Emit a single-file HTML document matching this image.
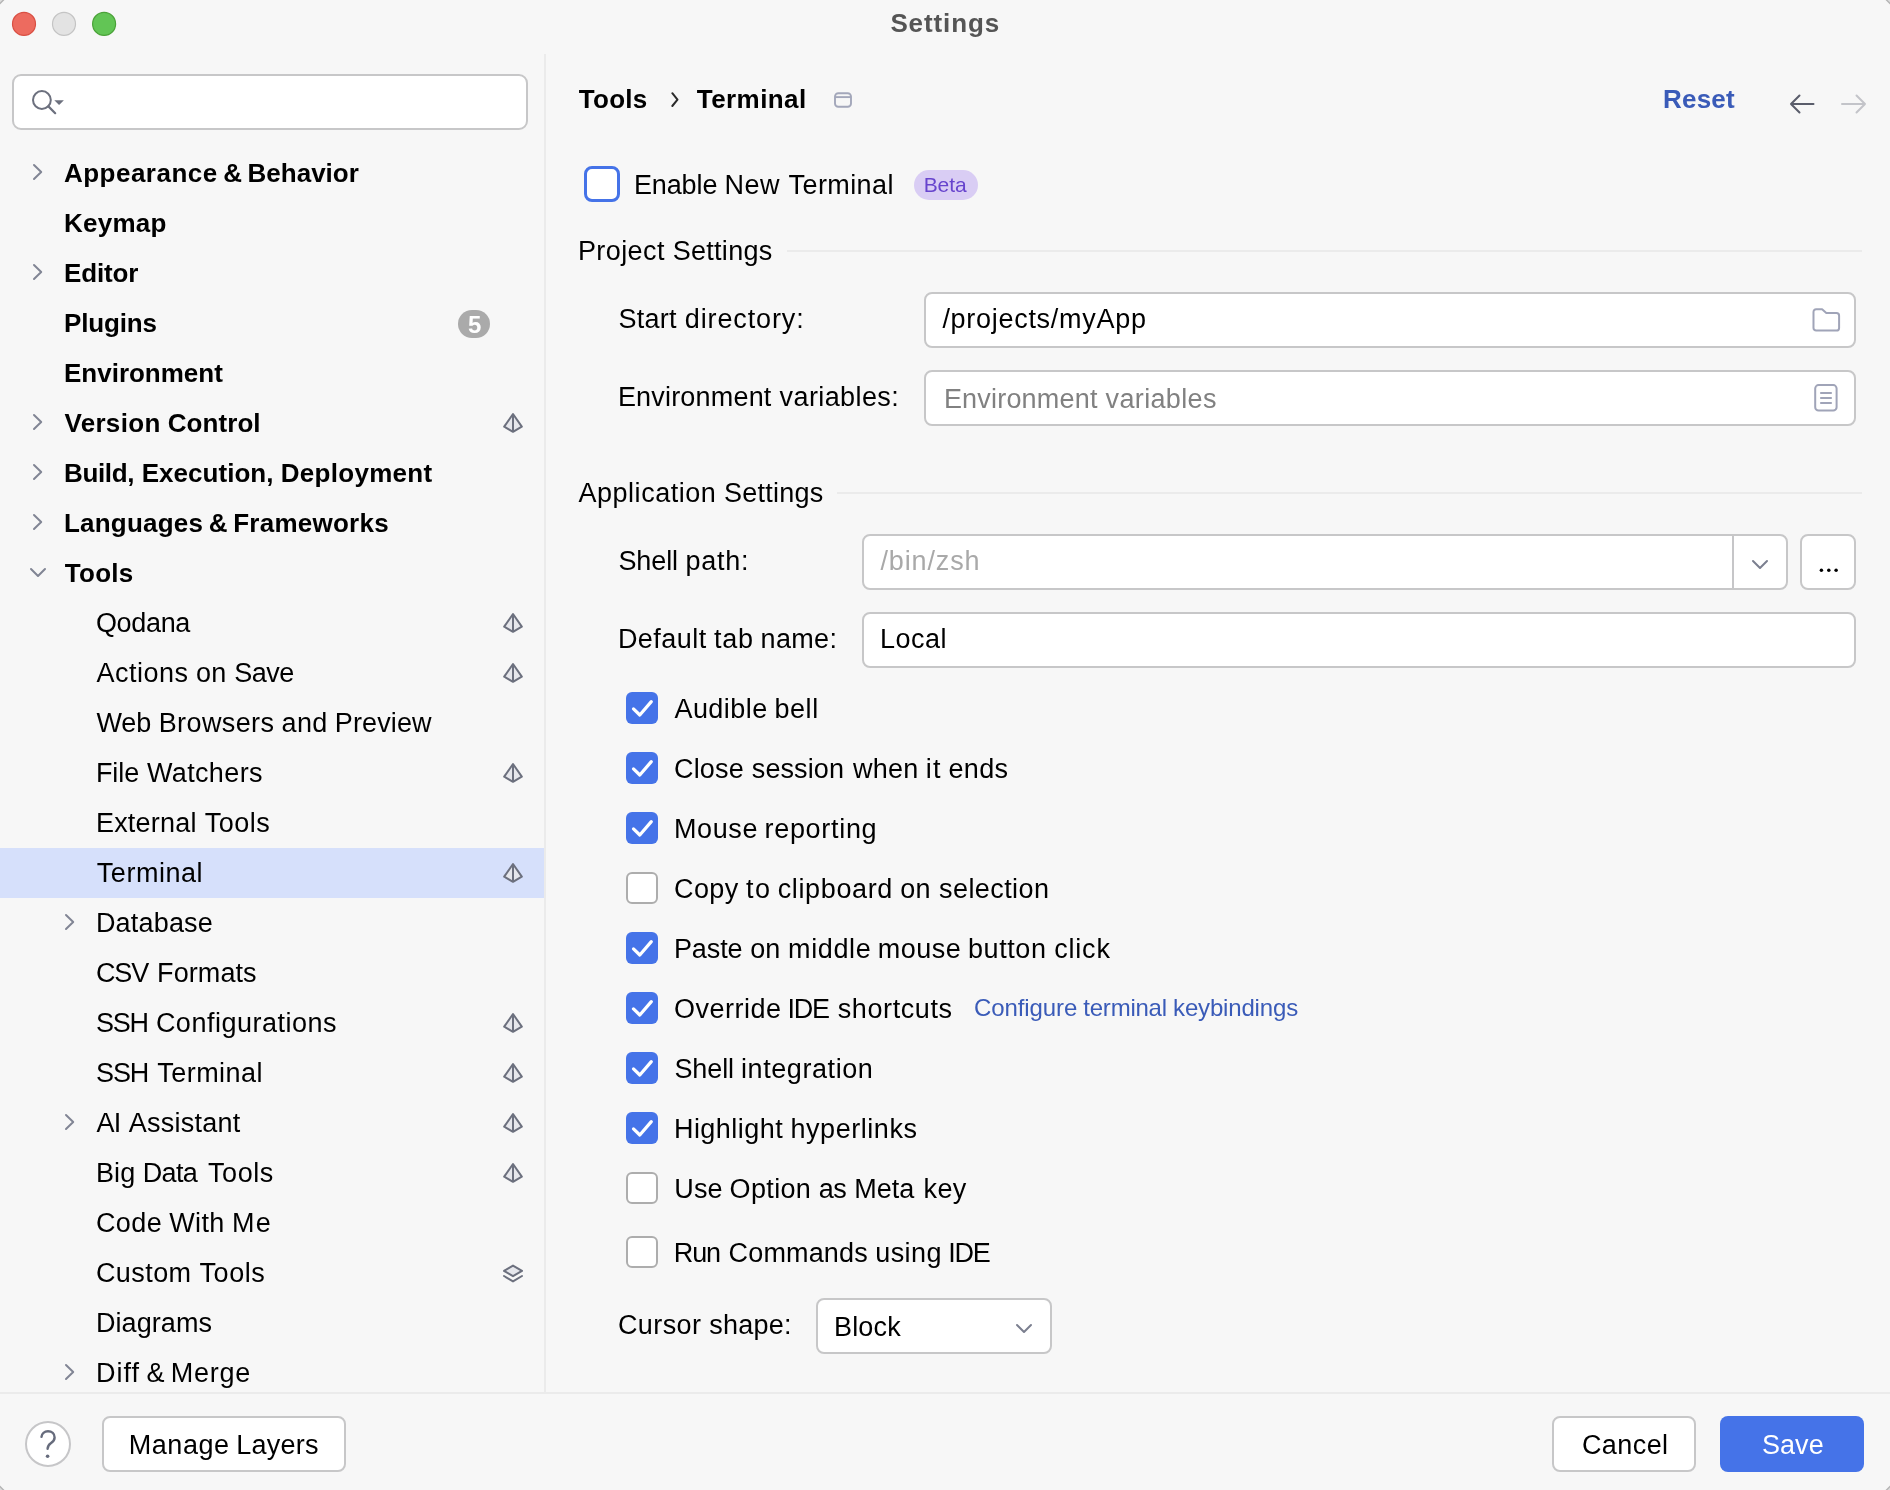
<!DOCTYPE html>
<html><head><meta charset="utf-8"><title>Settings</title>
<style>
html,body{margin:0;padding:0}
body{width:1890px;height:1490px;overflow:hidden;background:#f7f7f7;font-family:"Liberation Sans",sans-serif;position:relative}
.t{position:absolute;left:0;white-space:nowrap;line-height:40px;height:40px;margin:0}
.t span{position:absolute;top:0}
.a{position:absolute;box-sizing:border-box}
.in{background:#fff;border:2px solid #c7c7c8;border-radius:8px}
.cb{width:32px;height:32px;border-radius:6px;left:626px}
.on{background:#4573e8}
.off{background:#fff;border:2px solid #adadad}
svg{position:absolute;overflow:visible}
</style></head><body><div id="win" style="position:absolute;left:0;top:0;width:1890px;height:1490px;will-change:transform">
<svg style="left:0;top:0" width="130" height="48" viewBox="0 0 130 48"><circle cx="24" cy="23.9" r="11.5" fill="#ed6b5f" stroke="#d94f43" stroke-width="1.2"/><circle cx="64" cy="23.9" r="11.5" fill="#e3e3e3" stroke="#c4c4c4" stroke-width="1.2"/><circle cx="104.1" cy="23.9" r="11.5" fill="#62c555" stroke="#4aa238" stroke-width="1.2"/></svg>
<svg style="left:0;top:0" width="1890" height="1490" viewBox="0 0 1890 1490"><g fill="#dcdcdc" stroke="#b4b4b4" stroke-width="1.4"><path d="M-1 4.5 L4.5 -1 L-1 -1 Z"/><path d="M1891 4.5 L1885.5 -1 L1891 -1 Z"/><path d="M-1 1485.5 L4.5 1491 L-1 1491 Z"/><path d="M1891 1485.5 L1885.5 1491 L1891 1491 Z"/></g></svg>
<div class="a" style="left:544px;top:54px;width:2px;height:1338px;background:#ebebeb"></div>
<div class="a" style="left:0;top:1392px;width:1890px;height:2px;background:#ebebeb"></div>
<div class="a in" style="left:12px;top:74px;width:516px;height:56px;border-radius:9px"></div>
<svg style="left:28px;top:86px" width="40" height="30" viewBox="28 86 40 30"><circle cx="41.9" cy="100" r="8.9" fill="none" stroke="#6c707e" stroke-width="2"/><path d="M48.4 106.4 L55.2 113.2" stroke="#6c707e" stroke-width="2.2" stroke-linecap="round"/><path d="M54.3 100.2 H63.9 L59.1 105 Z" fill="#6c707e"/></svg>
<div class="a" style="left:0;top:848px;width:544px;height:50px;background:#d6e0fb"></div>
<svg style="left:32px;top:163px" width="12" height="18" viewBox="0 0 12 18"><path d="M2 2 L9.2 9 L2 16" fill="none" stroke="#818594" stroke-width="2" stroke-linecap="round" stroke-linejoin="round"/></svg>
<svg style="left:32px;top:263px" width="12" height="18" viewBox="0 0 12 18"><path d="M2 2 L9.2 9 L2 16" fill="none" stroke="#818594" stroke-width="2" stroke-linecap="round" stroke-linejoin="round"/></svg>
<svg style="left:32px;top:413px" width="12" height="18" viewBox="0 0 12 18"><path d="M2 2 L9.2 9 L2 16" fill="none" stroke="#818594" stroke-width="2" stroke-linecap="round" stroke-linejoin="round"/></svg>
<svg style="left:32px;top:463px" width="12" height="18" viewBox="0 0 12 18"><path d="M2 2 L9.2 9 L2 16" fill="none" stroke="#818594" stroke-width="2" stroke-linecap="round" stroke-linejoin="round"/></svg>
<svg style="left:32px;top:513px" width="12" height="18" viewBox="0 0 12 18"><path d="M2 2 L9.2 9 L2 16" fill="none" stroke="#818594" stroke-width="2" stroke-linecap="round" stroke-linejoin="round"/></svg>
<svg style="left:28.5px;top:566.5px" width="18" height="11" viewBox="0 0 18 11"><path d="M2 2 L9 9 L16 2" fill="none" stroke="#818594" stroke-width="2" stroke-linecap="round" stroke-linejoin="round"/></svg>
<svg style="left:64px;top:913px" width="12" height="18" viewBox="0 0 12 18"><path d="M2 2 L9.2 9 L2 16" fill="none" stroke="#818594" stroke-width="2" stroke-linecap="round" stroke-linejoin="round"/></svg>
<svg style="left:64px;top:1113px" width="12" height="18" viewBox="0 0 12 18"><path d="M2 2 L9.2 9 L2 16" fill="none" stroke="#818594" stroke-width="2" stroke-linecap="round" stroke-linejoin="round"/></svg>
<svg style="left:64px;top:1363px" width="12" height="18" viewBox="0 0 12 18"><path d="M2 2 L9.2 9 L2 16" fill="none" stroke="#818594" stroke-width="2" stroke-linecap="round" stroke-linejoin="round"/></svg>
<svg style="left:502px;top:411.8px" width="22" height="22" viewBox="0 0 22 22"><path d="M11 2 L2.2 14.6 L11 19.8 L19.8 14.6 Z" fill="#e6e7ec" stroke="#6c707e" stroke-width="2" stroke-linejoin="round"/><path d="M11 2 V19.8" stroke="#6c707e" stroke-width="2"/></svg>
<svg style="left:502px;top:611.8px" width="22" height="22" viewBox="0 0 22 22"><path d="M11 2 L2.2 14.6 L11 19.8 L19.8 14.6 Z" fill="#e6e7ec" stroke="#6c707e" stroke-width="2" stroke-linejoin="round"/><path d="M11 2 V19.8" stroke="#6c707e" stroke-width="2"/></svg>
<svg style="left:502px;top:661.8px" width="22" height="22" viewBox="0 0 22 22"><path d="M11 2 L2.2 14.6 L11 19.8 L19.8 14.6 Z" fill="#e6e7ec" stroke="#6c707e" stroke-width="2" stroke-linejoin="round"/><path d="M11 2 V19.8" stroke="#6c707e" stroke-width="2"/></svg>
<svg style="left:502px;top:761.8px" width="22" height="22" viewBox="0 0 22 22"><path d="M11 2 L2.2 14.6 L11 19.8 L19.8 14.6 Z" fill="#e6e7ec" stroke="#6c707e" stroke-width="2" stroke-linejoin="round"/><path d="M11 2 V19.8" stroke="#6c707e" stroke-width="2"/></svg>
<svg style="left:502px;top:861.8px" width="22" height="22" viewBox="0 0 22 22"><path d="M11 2 L2.2 14.6 L11 19.8 L19.8 14.6 Z" fill="#e6e7ec" stroke="#6c707e" stroke-width="2" stroke-linejoin="round"/><path d="M11 2 V19.8" stroke="#6c707e" stroke-width="2"/></svg>
<svg style="left:502px;top:1011.8px" width="22" height="22" viewBox="0 0 22 22"><path d="M11 2 L2.2 14.6 L11 19.8 L19.8 14.6 Z" fill="#e6e7ec" stroke="#6c707e" stroke-width="2" stroke-linejoin="round"/><path d="M11 2 V19.8" stroke="#6c707e" stroke-width="2"/></svg>
<svg style="left:502px;top:1061.8px" width="22" height="22" viewBox="0 0 22 22"><path d="M11 2 L2.2 14.6 L11 19.8 L19.8 14.6 Z" fill="#e6e7ec" stroke="#6c707e" stroke-width="2" stroke-linejoin="round"/><path d="M11 2 V19.8" stroke="#6c707e" stroke-width="2"/></svg>
<svg style="left:502px;top:1111.8px" width="22" height="22" viewBox="0 0 22 22"><path d="M11 2 L2.2 14.6 L11 19.8 L19.8 14.6 Z" fill="#e6e7ec" stroke="#6c707e" stroke-width="2" stroke-linejoin="round"/><path d="M11 2 V19.8" stroke="#6c707e" stroke-width="2"/></svg>
<svg style="left:502px;top:1161.8px" width="22" height="22" viewBox="0 0 22 22"><path d="M11 2 L2.2 14.6 L11 19.8 L19.8 14.6 Z" fill="#e6e7ec" stroke="#6c707e" stroke-width="2" stroke-linejoin="round"/><path d="M11 2 V19.8" stroke="#6c707e" stroke-width="2"/></svg>
<svg style="left:501px;top:1262px" width="24" height="24" viewBox="501 1262 24 24"><path d="M513 1265.6 L522 1270.9 L513 1276.2 L504 1270.9 Z" fill="#e6e7ec" stroke="#6c707e" stroke-width="2" stroke-linejoin="round"/><path d="M504 1276 L513 1281.4 L522 1276" fill="none" stroke="#6c707e" stroke-width="2" stroke-linejoin="round" stroke-linecap="round"/></svg>
<div class="a" style="left:458px;top:310px;width:32px;height:28px;border-radius:14px;background:#aaaaaa"></div>
<div class="t" style="left:458.8px;top:304.6px;width:32px;text-align:center;color:#fff;font-weight:700;font-size:24px">5</div>
<div class="a" style="left:25px;top:1421px;width:46px;height:46px;border-radius:50%;background:#fff;border:2px solid #c6c6c8"></div>
<svg style="left:25px;top:1421px" width="46" height="46" viewBox="25 1421 46 46"><path d="M41.5 1436.8 C41.8 1433.6 44.4 1431.2 48 1431.2 C51.8 1431.2 54.6 1433.8 54.6 1437.4 C54.6 1440.2 53.2 1441.6 50.8 1443.2 C48.6 1444.7 47.6 1446.2 47.6 1448.8" fill="none" stroke="#666b7c" stroke-width="2.4" stroke-linecap="round"/><circle cx="47.6" cy="1456.2" r="1.8" fill="#666b7c"/></svg>
<div class="a in" style="left:102px;top:1416px;width:244px;height:56px"></div>
<div class="a in" style="left:1552px;top:1416px;width:144px;height:56px"></div>
<div class="a" style="left:1720px;top:1416px;width:144px;height:56px;border-radius:8px;background:#4573e8"></div>
<svg style="left:668px;top:88px" width="14" height="22" viewBox="668 88 14 22"><path d="M672.3 93.2 L677.5 99.6 L672.3 106" fill="none" stroke="#2b2b2b" stroke-width="2" stroke-linecap="round" stroke-linejoin="round"/></svg>
<svg style="left:832px;top:90px" width="22" height="20" viewBox="832 90 22 20"><rect x="835" y="93.2" width="16" height="13.6" rx="3.3" fill="none" stroke="#a3a7ba" stroke-width="1.9"/><path d="M835 97.1 H851" stroke="#a3a7ba" stroke-width="1.9"/></svg>
<svg style="left:0;top:0" width="1890" height="130" viewBox="0 0 1890 130"><path d="M1813.5 104 H1791 M1799.5 95.5 L1791 104 L1799.5 112.5" fill="none" stroke="#5a5d6b" stroke-width="2" stroke-linecap="round" stroke-linejoin="round"/></svg>
<svg style="left:0;top:0" width="1890" height="130" viewBox="0 0 1890 130"><path d="M1842 104 H1865 M1856.5 95.5 L1865 104 L1856.5 112.5" fill="none" stroke="#c3c4c9" stroke-width="2" stroke-linecap="round" stroke-linejoin="round"/></svg>
<div class="a" style="left:584px;top:166px;width:36px;height:36px;border-radius:8px;background:#fff;border:3.7px solid #4573e8"></div>
<div class="a" style="left:914px;top:170px;width:64px;height:30px;border-radius:15px;background:#d9cdf4"></div>
<div class="a" style="left:787px;top:250px;width:1075px;height:2px;background:#ebebeb"></div>
<div class="a" style="left:837px;top:492px;width:1025px;height:2px;background:#ebebeb"></div>
<div class="a in" style="left:924px;top:292px;width:932px;height:56px"></div>
<div class="a in" style="left:924px;top:370px;width:932px;height:56px"></div>
<div class="a in" style="left:862px;top:534px;width:926px;height:56px"></div>
<div class="a" style="left:1732px;top:536px;width:2px;height:52px;background:#c6c6c8"></div>
<div class="a in" style="left:1800px;top:534px;width:56px;height:56px"></div>
<div class="a in" style="left:862px;top:612px;width:994px;height:56px"></div>
<div class="a in" style="left:816px;top:1298px;width:236px;height:56px"></div>
<svg style="left:1810px;top:305px" width="32" height="28" viewBox="1810 305 32 28"><path d="M1813.5 311.9 a2.6 2.6 0 0 1 2.6 -2.6 h6 l4.2 3.8 h10.2 a2.6 2.6 0 0 1 2.6 2.6 v12.2 a2.6 2.6 0 0 1 -2.6 2.6 h-20.4 a2.6 2.6 0 0 1 -2.6 -2.6 z" fill="none" stroke="#a0a4b8" stroke-width="2" stroke-linejoin="round"/></svg>
<svg style="left:1810px;top:382px" width="32" height="32" viewBox="1810 382 32 32"><rect x="1815.2" y="385.1" width="21.4" height="25.5" rx="3.4" fill="none" stroke="#a0a4b8" stroke-width="2"/><path d="M1820.2 393 H1831.8 M1820.2 398 H1831.8 M1820.2 403 H1831.8" stroke="#a0a4b8" stroke-width="1.9"/></svg>
<svg style="left:1751px;top:558.5px" width="18" height="11" viewBox="0 0 18 11"><path d="M2 2 L9 9 L16 2" fill="none" stroke="#7b7f8f" stroke-width="2" stroke-linecap="round" stroke-linejoin="round"/></svg>
<svg style="left:1015px;top:1323px" width="18" height="11" viewBox="0 0 18 11"><path d="M2 2 L9 9 L16 2" fill="none" stroke="#7b7f8f" stroke-width="2" stroke-linecap="round" stroke-linejoin="round"/></svg>
<svg style="left:1815px;top:564px" width="28" height="12" viewBox="1815 564 28 12"><circle cx="1821.4" cy="570.2" r="1.75"/><circle cx="1828.8" cy="570.2" r="1.75"/><circle cx="1836.1" cy="570.2" r="1.75"/></svg>
<div class="a cb on" style="top:692px"></div><svg style="left:626px;top:692px" width="32" height="32" viewBox="0 0 32 32"><path d="M7.5 16.9 L13.8 23 L25.3 9.6" fill="none" stroke="#fff" stroke-width="3.2" stroke-linecap="round" stroke-linejoin="round"/></svg>
<div class="a cb on" style="top:752px"></div><svg style="left:626px;top:752px" width="32" height="32" viewBox="0 0 32 32"><path d="M7.5 16.9 L13.8 23 L25.3 9.6" fill="none" stroke="#fff" stroke-width="3.2" stroke-linecap="round" stroke-linejoin="round"/></svg>
<div class="a cb on" style="top:812px"></div><svg style="left:626px;top:812px" width="32" height="32" viewBox="0 0 32 32"><path d="M7.5 16.9 L13.8 23 L25.3 9.6" fill="none" stroke="#fff" stroke-width="3.2" stroke-linecap="round" stroke-linejoin="round"/></svg>
<div class="a cb off" style="top:872px"></div>
<div class="a cb on" style="top:932px"></div><svg style="left:626px;top:932px" width="32" height="32" viewBox="0 0 32 32"><path d="M7.5 16.9 L13.8 23 L25.3 9.6" fill="none" stroke="#fff" stroke-width="3.2" stroke-linecap="round" stroke-linejoin="round"/></svg>
<div class="a cb on" style="top:992px"></div><svg style="left:626px;top:992px" width="32" height="32" viewBox="0 0 32 32"><path d="M7.5 16.9 L13.8 23 L25.3 9.6" fill="none" stroke="#fff" stroke-width="3.2" stroke-linecap="round" stroke-linejoin="round"/></svg>
<div class="a cb on" style="top:1052px"></div><svg style="left:626px;top:1052px" width="32" height="32" viewBox="0 0 32 32"><path d="M7.5 16.9 L13.8 23 L25.3 9.6" fill="none" stroke="#fff" stroke-width="3.2" stroke-linecap="round" stroke-linejoin="round"/></svg>
<div class="a cb on" style="top:1112px"></div><svg style="left:626px;top:1112px" width="32" height="32" viewBox="0 0 32 32"><path d="M7.5 16.9 L13.8 23 L25.3 9.6" fill="none" stroke="#fff" stroke-width="3.2" stroke-linecap="round" stroke-linejoin="round"/></svg>
<div class="a cb off" style="top:1172px"></div>
<div class="a cb off" style="top:1236px"></div>
<div class="t" style="top:2.91px;font-size:26px;font-weight:700;color:#555555"><span style="left:890.39px;letter-spacing:0.885px">Settings</span></div>
<div class="t" style="top:152.81px;font-size:26px;font-weight:700"><span style="left:64.00px;letter-spacing:0.480px">Appearance </span><span style="left:223.19px;letter-spacing:0.000px">&amp; </span><span style="left:247.57px;letter-spacing:0.003px">Behavior</span></div>
<div class="t" style="top:202.81px;font-size:26px;font-weight:700"><span style="left:64.00px;letter-spacing:0.231px">Keymap</span></div>
<div class="t" style="top:252.81px;font-size:26px;font-weight:700"><span style="left:64.00px;letter-spacing:-0.149px">Editor</span></div>
<div class="t" style="top:302.81px;font-size:26px;font-weight:700"><span style="left:64.00px;letter-spacing:-0.175px">Plugins</span></div>
<div class="t" style="top:352.81px;font-size:26px;font-weight:700"><span style="left:64.00px;letter-spacing:-0.008px">Environment</span></div>
<div class="t" style="top:402.81px;font-size:26px;font-weight:700"><span style="left:64.41px;letter-spacing:0.327px">Version </span><span style="left:167.77px;letter-spacing:0.068px">Control</span></div>
<div class="t" style="top:452.81px;font-size:26px;font-weight:700"><span style="left:64.00px;letter-spacing:-0.341px">Build, </span><span style="left:141.71px;letter-spacing:0.030px">Execution, </span><span style="left:280.67px;letter-spacing:0.305px">Deployment</span></div>
<div class="t" style="top:502.81px;font-size:26px;font-weight:700"><span style="left:64.00px;letter-spacing:0.211px">Languages </span><span style="left:208.73px;letter-spacing:0.000px">&amp; </span><span style="left:233.14px;letter-spacing:0.264px">Frameworks</span></div>
<div class="t" style="top:552.81px;font-size:26px;font-weight:700"><span style="left:64.81px;letter-spacing:0.249px">Tools</span></div>
<div class="t" style="top:603.17px;font-size:27px"><span style="left:95.95px;letter-spacing:-0.337px">Qodana</span></div>
<div class="t" style="top:653.17px;font-size:27px"><span style="left:96.41px;letter-spacing:0.515px">Actions </span><span style="left:196.02px;letter-spacing:0.121px">on </span><span style="left:234.30px;letter-spacing:-0.521px">Save</span></div>
<div class="t" style="top:703.17px;font-size:27px"><span style="left:96.41px;letter-spacing:-0.076px">Web </span><span style="left:158.74px;letter-spacing:0.378px">Browsers </span><span style="left:281.49px;letter-spacing:0.382px">and </span><span style="left:334.75px;letter-spacing:0.139px">Preview</span></div>
<div class="t" style="top:753.17px;font-size:27px"><span style="left:95.92px;letter-spacing:-0.030px">File </span><span style="left:146.92px;letter-spacing:0.367px">Watchers</span></div>
<div class="t" style="top:803.17px;font-size:27px"><span style="left:95.92px;letter-spacing:0.219px">External </span><span style="left:204.70px;letter-spacing:0.519px">Tools</span></div>
<div class="t" style="top:853.17px;font-size:27px"><span style="left:96.80px;letter-spacing:0.537px">Terminal</span></div>
<div class="t" style="top:903.17px;font-size:27px"><span style="left:95.92px;letter-spacing:0.185px">Database</span></div>
<div class="t" style="top:953.17px;font-size:27px"><span style="left:95.95px;letter-spacing:-1.143px">CSV </span><span style="left:157.05px;letter-spacing:0.093px">Formats</span></div>
<div class="t" style="top:1003.17px;font-size:27px"><span style="left:95.92px;letter-spacing:-1.200px">SSH </span><span style="left:155.89px;letter-spacing:0.501px">Configurations</span></div>
<div class="t" style="top:1053.17px;font-size:27px"><span style="left:96.12px;letter-spacing:-1.200px">SSH </span><span style="left:157.22px;letter-spacing:0.469px">Terminal</span></div>
<div class="t" style="top:1103.17px;font-size:27px"><span style="left:96.41px;letter-spacing:-0.645px">AI </span><span style="left:128.67px;letter-spacing:0.272px">Assistant</span></div>
<div class="t" style="top:1153.17px;font-size:27px"><span style="left:95.92px;letter-spacing:0.177px">Big </span><span style="left:142.82px;letter-spacing:-0.719px">Data </span><span style="left:208.06px;letter-spacing:0.574px">Tools</span></div>
<div class="t" style="top:1203.17px;font-size:27px"><span style="left:95.95px;letter-spacing:0.427px">Code </span><span style="left:169.34px;letter-spacing:0.303px">With </span><span style="left:231.93px;letter-spacing:1.351px">Me</span></div>
<div class="t" style="top:1253.17px;font-size:27px"><span style="left:95.95px;letter-spacing:0.426px">Custom </span><span style="left:199.54px;letter-spacing:0.573px">Tools</span></div>
<div class="t" style="top:1303.17px;font-size:27px"><span style="left:95.92px;letter-spacing:0.082px">Diagrams</span></div>
<div class="t" style="top:1353.17px;font-size:27px"><span style="left:95.92px;letter-spacing:1.026px">Diff </span><span style="left:146.39px;letter-spacing:0.000px">&amp; </span><span style="left:170.75px;letter-spacing:0.744px">Merge</span></div>
<div class="t" style="top:1425.17px;font-size:27px"><span style="left:128.79px;letter-spacing:0.539px">Manage </span><span style="left:236.23px;letter-spacing:0.234px">Layers</span></div>
<div class="t" style="top:1425.17px;font-size:27px"><span style="left:1581.93px;letter-spacing:0.420px">Cancel</span></div>
<div class="t" style="top:1425.17px;font-size:27px;color:#ffffff"><span style="left:1761.96px;letter-spacing:0.066px">Save</span></div>
<div class="t" style="top:78.91px;font-size:26px;font-weight:700"><span style="left:578.81px;letter-spacing:0.249px">Tools</span></div>
<div class="t" style="top:78.91px;font-size:26px;font-weight:700"><span style="left:696.81px;letter-spacing:0.428px">Terminal</span></div>
<div class="t" style="top:78.91px;font-size:26px;font-weight:700;color:#3a5bb8"><span style="left:1663.00px;letter-spacing:0.203px">Reset</span></div>
<div class="t" style="top:164.67px;font-size:27px"><span style="left:633.92px;letter-spacing:-0.114px">Enable </span><span style="left:724.54px;letter-spacing:0.467px">New </span><span style="left:788.52px;letter-spacing:0.422px">Terminal</span></div>
<div class="t" style="top:165.02px;font-size:21px;color:#6744cd"><span style="left:923.66px;letter-spacing:-0.097px">Beta</span></div>
<div class="t" style="top:230.67px;font-size:27px"><span style="left:577.92px;letter-spacing:0.419px">Project </span><span style="left:672.69px;letter-spacing:0.284px">Settings</span></div>
<div class="t" style="top:298.87px;font-size:27px"><span style="left:618.38px;letter-spacing:0.299px">Start </span><span style="left:684.82px;letter-spacing:0.873px">directory:</span></div>
<div class="t" style="top:298.97px;font-size:27px"><span style="left:942.41px;letter-spacing:0.709px">/projects/myApp</span></div>
<div class="t" style="top:376.87px;font-size:27px"><span style="left:617.92px;letter-spacing:0.188px">Environment </span><span style="left:779.58px;letter-spacing:0.401px">variables:</span></div>
<div class="t" style="top:378.97px;font-size:27px;color:#818181"><span style="left:943.92px;letter-spacing:0.192px">Environment </span><span style="left:1105.62px;letter-spacing:0.340px">variables</span></div>
<div class="t" style="top:472.67px;font-size:27px"><span style="left:578.41px;letter-spacing:0.539px">Application </span><span style="left:724.04px;letter-spacing:0.239px">Settings</span></div>
<div class="t" style="top:540.87px;font-size:27px"><span style="left:618.38px;letter-spacing:-0.094px">Shell </span><span style="left:685.39px;letter-spacing:0.770px">path:</span></div>
<div class="t" style="top:540.97px;font-size:27px;color:#a9a9a9"><span style="left:880.41px;letter-spacing:0.873px">/bin/zsh</span></div>
<div class="t" style="top:618.87px;font-size:27px"><span style="left:617.92px;letter-spacing:0.447px">Default </span><span style="left:713.97px;letter-spacing:0.782px">tab </span><span style="left:760.56px;letter-spacing:0.330px">name:</span></div>
<div class="t" style="top:618.97px;font-size:27px"><span style="left:879.92px;letter-spacing:0.511px">Local</span></div>
<div class="t" style="top:688.87px;font-size:27px"><span style="left:674.41px;letter-spacing:0.465px">Audible </span><span style="left:774.38px;letter-spacing:0.583px">bell</span></div>
<div class="t" style="top:748.87px;font-size:27px"><span style="left:673.95px;letter-spacing:0.211px">Close </span><span style="left:751.77px;letter-spacing:0.112px">session </span><span style="left:852.96px;letter-spacing:0.288px">when </span><span style="left:925.64px;letter-spacing:1.281px">it </span><span style="left:948.57px;letter-spacing:0.292px">ends</span></div>
<div class="t" style="top:808.87px;font-size:27px"><span style="left:673.92px;letter-spacing:0.619px">Mouse </span><span style="left:764.53px;letter-spacing:0.694px">reporting</span></div>
<div class="t" style="top:868.87px;font-size:27px"><span style="left:673.95px;letter-spacing:0.456px">Copy </span><span style="left:746.08px;letter-spacing:1.505px">to </span><span style="left:777.68px;letter-spacing:0.641px">clipboard </span><span style="left:900.27px;letter-spacing:0.167px">on </span><span style="left:939.04px;letter-spacing:0.423px">selection</span></div>
<div class="t" style="top:928.87px;font-size:27px"><span style="left:673.92px;letter-spacing:-0.094px">Paste </span><span style="left:750.14px;letter-spacing:0.146px">on </span><span style="left:788.02px;letter-spacing:0.633px">middle </span><span style="left:877.83px;letter-spacing:0.479px">mouse </span><span style="left:967.90px;letter-spacing:0.607px">button </span><span style="left:1054.14px;letter-spacing:0.827px">click</span></div>
<div class="t" style="top:988.87px;font-size:27px"><span style="left:673.95px;letter-spacing:0.516px">Override </span><span style="left:787.47px;letter-spacing:-1.200px">IDE </span><span style="left:837.76px;letter-spacing:0.594px">shortcuts</span></div>
<div class="t" style="top:1048.87px;font-size:27px"><span style="left:674.38px;letter-spacing:-0.091px">Shell </span><span style="left:740.99px;letter-spacing:0.575px">integration</span></div>
<div class="t" style="top:1108.87px;font-size:27px"><span style="left:673.92px;letter-spacing:0.472px">Highlight </span><span style="left:790.47px;letter-spacing:0.545px">hyperlinks</span></div>
<div class="t" style="top:1168.87px;font-size:27px"><span style="left:674.34px;letter-spacing:0.052px">Use </span><span style="left:729.59px;letter-spacing:0.350px">Option </span><span style="left:818.63px;letter-spacing:-0.402px">as </span><span style="left:854.28px;letter-spacing:-0.049px">Meta </span><span style="left:923.61px;letter-spacing:0.336px">key</span></div>
<div class="t" style="top:1232.87px;font-size:27px"><span style="left:673.85px;letter-spacing:-1.200px">Run </span><span style="left:728.58px;letter-spacing:0.151px">Commands </span><span style="left:875.19px;letter-spacing:0.456px">using </span><span style="left:948.20px;letter-spacing:-1.200px">IDE</span></div>
<div class="t" style="top:988.29px;font-size:24px;color:#3a5bb8"><span style="left:974.08px;letter-spacing:-0.103px">Configure </span><span style="left:1083.32px;letter-spacing:-0.231px">terminal </span><span style="left:1173.09px;letter-spacing:-0.169px">keybindings</span></div>
<div class="t" style="top:1304.97px;font-size:27px"><span style="left:617.95px;letter-spacing:0.394px">Cursor </span><span style="left:709.36px;letter-spacing:0.206px">shape:</span></div>
<div class="t" style="top:1307.07px;font-size:27px"><span style="left:833.92px;letter-spacing:0.217px">Block</span></div>
</div></body></html>
